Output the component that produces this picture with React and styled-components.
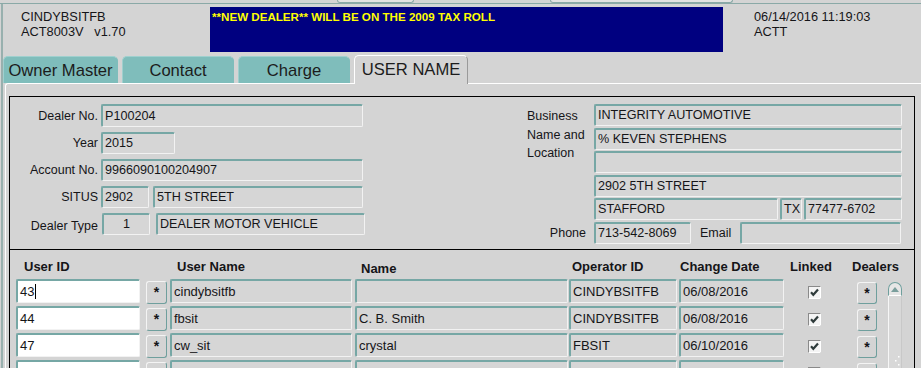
import React from 'react'
import styled, { createGlobalStyle } from 'styled-components'

const GlobalStyle = createGlobalStyle`
  html, body {
    margin: 0;
    padding: 0;
    background: #d4d4d4;
    overflow: hidden;
  }
  body {
    font-family: "Liberation Sans", Arial, sans-serif;
    color: #151518;
  }
`

const Page = styled.div`
  width: 921px;
  height: 368px;
  overflow: hidden;
  background: #d4d4d4;
`

const TopStrip = styled.div`
  display: flex;
  height: 3px;
  border-bottom: 1px solid #8aa9a7;
`

const Stub = styled.div`
  margin-left: ${p => p.$ml}px;
  width: ${p => p.$w}px;
  height: 2px;
  background: #e2e2e2;
  border: 1px solid #8aa9a7;
  border-top: none;
  border-radius: 0 0 3px 3px;
`

const Window = styled.div`
  margin-left: 1px;
  border-left: 2px solid #98b0ae;
  height: 364px;
`

const Header = styled.div`
  display: flex;
  align-items: flex-start;
  height: 51px;
`

const Info = styled.div`
  box-sizing: border-box;
  width: ${p => p.$w || 'auto'};
  padding-left: ${p => p.$pl || 0}px;
  padding-top: 5px;
  font-size: 12.8px;
  line-height: 15px;
  white-space: pre;
`

const Banner = styled.div`
  box-sizing: border-box;
  margin-top: 3px;
  width: 513px;
  height: 45px;
  padding: 3px 2px;
  background: #000080;
  color: #ffff00;
  font-weight: 700;
  font-size: 11.6px;
  line-height: 14px;
  margin-right: 31px;
`

const TabBar = styled.div`
  display: flex;
  align-items: flex-end;
  gap: 4px;
  height: 28px;
`

const Tab = styled.div`
  box-sizing: border-box;
  width: ${p => p.$w}px;
  height: ${p => (p.$active ? 29 : 27)}px;
  line-height: 27px;
  text-align: center;
  font-size: 16.6px;
  color: #1c1c1c;
  border-radius: 5px 5px 0 0;
  background: ${p => (p.$active ? '#d4d4d4' : '#7fbdbb')};
  border-top: 1px solid ${p => (p.$active ? '#ffffff' : '#9fd0ce')};
  border-left: 1px solid ${p => (p.$active ? '#ffffff' : '#9fd0ce')};
  border-right: 1px solid ${p => (p.$active ? '#9a9a9a' : '#7fbdbb')};
  position: relative;
  z-index: ${p => (p.$active ? 1 : 0)};
  margin-bottom: ${p => (p.$active ? -1 : 0)}px;
`

const Panel = styled.div`
  margin-left: 2px;
  border-top: 1px solid #ffffff;
  border-left: 1px solid #ffffff;
  border-top-left-radius: 3px;
  padding: 12px 0 0 3px;
`

const Frame = styled.div`
  box-sizing: border-box;
  width: 906px;
  border: 1px solid #000;
  border-bottom: none;
`

const TopSection = styled.div`
  box-sizing: border-box;
  display: flex;
  height: 153px;
  border-bottom: 1px solid #000;
`

const LeftCol = styled.div`
  display: grid;
  grid-template-columns: 88px auto;
  grid-auto-rows: min-content;
  column-gap: 3px;
  row-gap: 5px;
  width: 356px;
  padding-top: 7px;
  align-content: start;
`

const RightCol = styled.div`
  display: grid;
  grid-template-columns: 67px 308px;
  grid-auto-rows: 22px;
  row-gap: 1.6px;
  margin-left: 161px;
  padding-top: 7px;
  align-content: start;
`

const Label = styled.div`
  font-size: 12.5px;
  text-align: ${p => (p.$left ? 'left' : 'right')};
  padding-right: ${p => p.$pr || 0}px;
  padding-top: ${p => p.$pt || 0}px;
  align-self: center;
  white-space: nowrap;
`

const BizLabel = styled.div`
  grid-row: 1 / span 3;
  font-size: 12.5px;
  line-height: 18.5px;
  padding-top: 3px;
`

const Line = styled.div`
  display: flex;
  gap: ${p => p.$gap || 0}px;
  align-items: center;
  margin-left: ${p => p.$ml || 0}px;
`

const Field = styled.div`
  box-sizing: border-box;
  width: ${p => p.$w}px;
  height: ${p => p.$h || 22}px;
  line-height: ${p => (p.$h || 22) - 3}px;
  padding-left: ${p => (p.$center ? 0 : 2)}px;
  text-align: ${p => (p.$center ? 'center' : 'left')};
  font-size: ${p => p.$fs || 12.6}px;
  background: ${p => (p.$white ? '#ffffff' : '#d6d6d6')};
  border-top: 2px solid #76a7a5;
  border-left: 2px solid #76a7a5;
  border-right: 1px solid #f2f2f2;
  border-bottom: 1px solid #f2f2f2;
  border-radius: 2px;
  white-space: nowrap;
  overflow: hidden;
`

const InlineText = styled.span`
  font-size: 12.5px;
  padding: 0 ${p => p.$px || 0}px;
`

const UserSection = styled.div`
  display: grid;
  grid-template-columns: 130px 24px 185px 214px 110px 105px 73px 31px 14px;
  grid-template-rows: 17px repeat(4, 24px);
  row-gap: 3px;
  padding: 9px 0 0 6px;
`

const HeadCell = styled.div`
  font-size: 13px;
  font-weight: 700;
  line-height: 15px;
  padding-left: ${p => p.$pl || 0}px;
  padding-top: ${p => p.$pt || 0}px;
  margin-left: ${p => p.$ml || 0}px;
  white-space: nowrap;
`

const StarButton = styled.div`
  box-sizing: border-box;
  width: ${p => p.$w}px;
  height: ${p => p.$h}px;
  margin-top: ${p => p.$mt}px;
  border-top: 1px solid #f4f4f4;
  border-left: 1px solid #f4f4f4;
  border-right: 1px solid #6f9f9d;
  border-bottom: 1px solid #6f9f9d;
  border-radius: 3px;
  text-align: center;
  font-size: 14px;
  font-weight: 700;
  line-height: ${p => p.$h - 2}px;
`

const Caret = styled.span`
  display: inline-block;
  width: 1px;
  height: 15px;
  margin-left: 1px;
  background: #000;
  vertical-align: -3px;
`

const CheckCell = styled.div`
  padding: 6px 0 0 24px;
`

const ScrollBar = styled.div`
  grid-column: 9;
  grid-row: 2 / span 4;
  margin-top: 3px;
  width: 14px;
  display: flex;
  flex-direction: column;
`

const ScrollUp = styled.div`
  box-sizing: border-box;
  height: 14px;
  border: 1px solid #6f9f9d;
  border-bottom: 1px solid #ffffff;
  border-radius: 7px 7px 0 0;
  background: #e6e6e6;
  display: flex;
  align-items: center;
  justify-content: center;
`

const ScrollTrack = styled.div`
  flex: 1;
  border-left: 1px solid #f6f6f6;
  border-right: 1px solid #c8c8c8;
  background: #d8d8d8;
  position: relative;
`

const Grip = styled.svg`
  position: absolute;
  right: 1px;
  top: 60px;
`

const CheckBox = () => (
  <svg width="13" height="13" viewBox="0 0 13 13">
    <rect x="0.5" y="0.5" width="12" height="12" fill="#f4f4f4" stroke="#8a8a8a" />
    <path d="M12.5 0.5V12.5H0.5" fill="none" stroke="#ffffff" />
    <path d="M3 6.3 L5.3 8.8 L10 3.6" fill="none" stroke="#2f3b3b" strokeWidth="2.2" />
  </svg>
)

const users = [
  { id: '43', user: 'cindybsitfb', name: '', op: 'CINDYBSITFB', date: '06/08/2016', caret: true },
  { id: '44', user: 'fbsit', name: 'C. B. Smith', op: 'CINDYBSITFB', date: '06/08/2016' },
  { id: '47', user: 'cw_sit', name: 'crystal', op: 'FBSIT', date: '06/10/2016' },
  { id: '', user: '', name: '', op: '', date: '' },
]

const App = () => (
  <Page>
    <GlobalStyle />
    <TopStrip>
      <Stub $ml={337} $w={75} />
      <Stub $ml={136} $w={181} />
    </TopStrip>
    <Window>
      <Header>
        <Info $w="207px" $pl={18}>{'CINDYBSITFB\nACT8003V   v1.70'}</Info>
        <Banner>**NEW DEALER** WILL BE ON THE 2009 TAX ROLL</Banner>
        <Info>{'06/14/2016 11:19:03\nACTT'}</Info>
      </Header>
      <TabBar>
        <Tab $w={115}>Owner Master</Tab>
        <Tab $w={112}>Contact</Tab>
        <Tab $w={112}>Charge</Tab>
        <Tab $w={114} $active>USER NAME</Tab>
      </TabBar>
      <Panel>
        <Frame>
          <TopSection>
            <LeftCol>
              <Label>Dealer No.</Label>
              <Field $w={262} $h={23}>P100204</Field>
              <Label>Year</Label>
              <Field $w={74}>2015</Field>
              <Label>Account No.</Label>
              <Field $w={262}>9966090100204907</Field>
              <Label>SITUS</Label>
              <Line $gap={4}>
                <Field $w={48}>2902</Field>
                <Field $w={210}>5TH STREET</Field>
              </Line>
              <Label $pt={3}>Dealer Type</Label>
              <Line $gap={6} $ml={1}>
                <Field $w={48} $center>1</Field>
                <Field $w={209}>DEALER MOTOR VEHICLE</Field>
              </Line>
            </LeftCol>
            <RightCol>
              <BizLabel>Business<br />Name and<br />Location</BizLabel>
              <Field $w={308}>INTEGRITY AUTOMOTIVE</Field>
              <Field $w={308}>% KEVEN STEPHENS</Field>
              <Field $w={308}></Field>
              <div />
              <Field $w={308}>2902 5TH STREET</Field>
              <div />
              <Line $gap={2}>
                <Field $w={184}>STAFFORD</Field>
                <Field $w={22}>TX</Field>
                <Field $w={98}>77477-6702</Field>
              </Line>
              <Label $pr={8}>Phone</Label>
              <Line>
                <Field $w={97}>713-542-8069</Field>
                <InlineText $px={9}>Email</InlineText>
                <Field $w={161}></Field>
              </Line>
            </RightCol>
          </TopSection>
          <UserSection>
            <HeadCell $pl={8}>User ID</HeadCell>
            <div />
            <HeadCell $pl={7}>User Name</HeadCell>
            <HeadCell $pl={6} $pt={2}>Name</HeadCell>
            <HeadCell $pl={3}>Operator ID</HeadCell>
            <HeadCell $pl={1}>Change Date</HeadCell>
            <HeadCell $pl={6}>Linked</HeadCell>
            <HeadCell $ml={-5}>Dealers</HeadCell>
            <div />
            {users.map((u, i) => (
              <React.Fragment key={i}>
                <Field $w={124} $h={24} $fs={13} $white>
                  {u.id}
                  {u.caret && <Caret />}
                </Field>
                <StarButton $w={21} $h={23} $mt={2}>{i < 3 ? '*' : ''}</StarButton>
                <Field $w={182} $h={24} $fs={13}>{u.user}</Field>
                <Field $w={213} $h={24} $fs={13}>{u.name}</Field>
                <Field $w={108} $h={24} $fs={13}>{u.op}</Field>
                <Field $w={105} $h={24} $fs={13}>{u.date}</Field>
                <CheckCell><CheckBox /></CheckCell>
                <StarButton $w={20} $h={22} $mt={3}>{i < 3 ? '*' : ''}</StarButton>
              </React.Fragment>
            ))}
            <ScrollBar>
              <ScrollUp>
                <svg width="8" height="5" viewBox="0 0 8 5">
                  <path d="M0 5 L4 0 L8 5Z" fill="#7a9e9c" />
                </svg>
              </ScrollUp>
              <ScrollTrack>
                <Grip width="6" height="14" viewBox="0 0 6 14">
                  <rect x="4" y="0" width="1.5" height="1.5" fill="#fff" />
                  <rect x="1" y="4" width="1.5" height="1.5" fill="#fff" />
                  <rect x="4" y="8" width="1.5" height="1.5" fill="#fff" />
                  <rect x="1" y="12" width="1.5" height="1.5" fill="#fff" />
                </Grip>
              </ScrollTrack>
            </ScrollBar>
          </UserSection>
        </Frame>
      </Panel>
    </Window>
  </Page>
)

export default App
